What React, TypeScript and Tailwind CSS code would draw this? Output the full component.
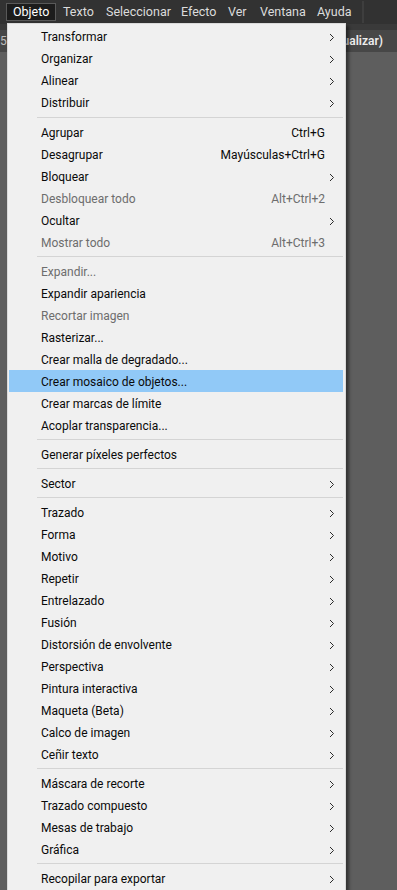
import React from "react";

type Item = { label: string; shortcut?: string; arrow?: boolean; disabled?: boolean; active?: boolean };
type Entry = Item | "sep";

const entries: Entry[] = [
  { label: "Transformar", arrow: true },
  { label: "Organizar", arrow: true },
  { label: "Alinear", arrow: true },
  { label: "Distribuir", arrow: true },
  "sep",
  { label: "Agrupar", shortcut: "Ctrl+G" },
  { label: "Desagrupar", shortcut: "Mayúsculas+Ctrl+G" },
  { label: "Bloquear", arrow: true },
  { label: "Desbloquear todo", shortcut: "Alt+Ctrl+2", disabled: true },
  { label: "Ocultar", arrow: true },
  { label: "Mostrar todo", shortcut: "Alt+Ctrl+3", disabled: true },
  "sep",
  { label: "Expandir...", disabled: true },
  { label: "Expandir apariencia" },
  { label: "Recortar imagen", disabled: true },
  { label: "Rasterizar..." },
  { label: "Crear malla de degradado..." },
  { label: "Crear mosaico de objetos...", active: true },
  { label: "Crear marcas de límite" },
  { label: "Acoplar transparencia..." },
  "sep",
  { label: "Generar píxeles perfectos" },
  "sep",
  { label: "Sector", arrow: true },
  "sep",
  { label: "Trazado", arrow: true },
  { label: "Forma", arrow: true },
  { label: "Motivo", arrow: true },
  { label: "Repetir", arrow: true },
  { label: "Entrelazado", arrow: true },
  { label: "Fusión", arrow: true },
  { label: "Distorsión de envolvente", arrow: true },
  { label: "Perspectiva", arrow: true },
  { label: "Pintura interactiva", arrow: true },
  { label: "Maqueta (Beta)", arrow: true },
  { label: "Calco de imagen", arrow: true },
  { label: "Ceñir texto", arrow: true },
  "sep",
  { label: "Máscara de recorte", arrow: true },
  { label: "Trazado compuesto", arrow: true },
  { label: "Mesas de trabajo", arrow: true },
  { label: "Gráfica", arrow: true },
  "sep",
  { label: "Recopilar para exportar", arrow: true },
];

const topItems = [
  { label: "Objeto", w: "w-[50px]", active: true },
  { label: "Texto", w: "w-[43px]" },
  { label: "Seleccionar", w: "w-[75px]" },
  { label: "Efecto", w: "w-[47px]" },
  { label: "Ver", w: "w-[32px]" },
  { label: "Ventana", w: "w-[57px]" },
  { label: "Ayuda", w: "w-[50px]" },
];

function Chevron() {
  return (
    <svg width="6" height="9" viewBox="0 0 6 9" className="block">
      <polyline points="1,1 4.5,4.5 1,8" fill="none" stroke="#2b2b2b" strokeWidth="1" />
    </svg>
  );
}

export default function App() {
  let sepCount = 0;
  return (
    <div
      className="relative w-[397px] h-[890px] overflow-hidden bg-[#5e5e5e]"
      style={{ fontFamily: '"Segoe UI", Roboto, "Noto Sans", sans-serif' }}
    >
      {/* top menu bar */}
      <div className="h-[24px] bg-[#323232] flex items-center pl-[6px]">
        {topItems.map((t) => (
          <div
            key={t.label}
            className={
              "h-[18px] flex items-center pl-[6px] text-[12.5px] leading-none box-border " +
              t.w +
              (t.active
                ? " bg-[#1c1c1c] border border-[#595959] text-white"
                : " border border-transparent text-[#dcdcdc]")
            }
          >
            {t.label}
          </div>
        ))}
        <div className="ml-[2px] w-[2px] h-[22px] bg-[#3e3e3e]" />
      </div>
      <div className="h-[6px] bg-[#3a3a3a]" />
      <div className="h-[22px] bg-[#474747] flex items-center justify-between pr-[14px]">
        <span className="ml-0 text-[12px] text-[#bdbdbd]">5(</span>
        <span className="text-[12px] font-semibold text-[#ececec]">(Previsualizar)</span>
      </div>

      {/* dropdown */}
      <div className="absolute left-[7px] top-[23px] w-[339px] bg-[#f0f0f0] border border-[#dadada] pt-[1px] pb-[4px] shadow-[3px_3px_3px_rgba(0,0,0,0.45)]">
        {entries.map((e, i) => {
          if (e === "sep") {
            sepCount++;
            const h = sepCount === 1 ? "h-[8px]" : "h-[7px]";
            return (
              <div key={i} className={"flex items-center " + h}>
                <div className="ml-[29px] mr-[2px] flex-1 h-[1px] bg-[#d4d4d4]" />
              </div>
            );
          }
          return (
            <div
              key={i}
              className={
                "h-[22px] ml-[1px] mr-[2px] pt-[2px] flex items-center pl-[32px] text-[12px] " +
                (e.active ? "bg-[#91c9f7] " : "") +
                (e.disabled ? "text-[#6d6d6d]" : "text-[#0a0a0a]")
              }
            >
              <span className="flex-1 whitespace-nowrap">{e.label}</span>
              {e.shortcut && <span className="whitespace-nowrap">{e.shortcut}</span>}
              <span className="w-[18px] pl-[4px] flex items-center">{e.arrow && <Chevron />}</span>
            </div>
          );
        })}
      </div>
    </div>
  );
}
